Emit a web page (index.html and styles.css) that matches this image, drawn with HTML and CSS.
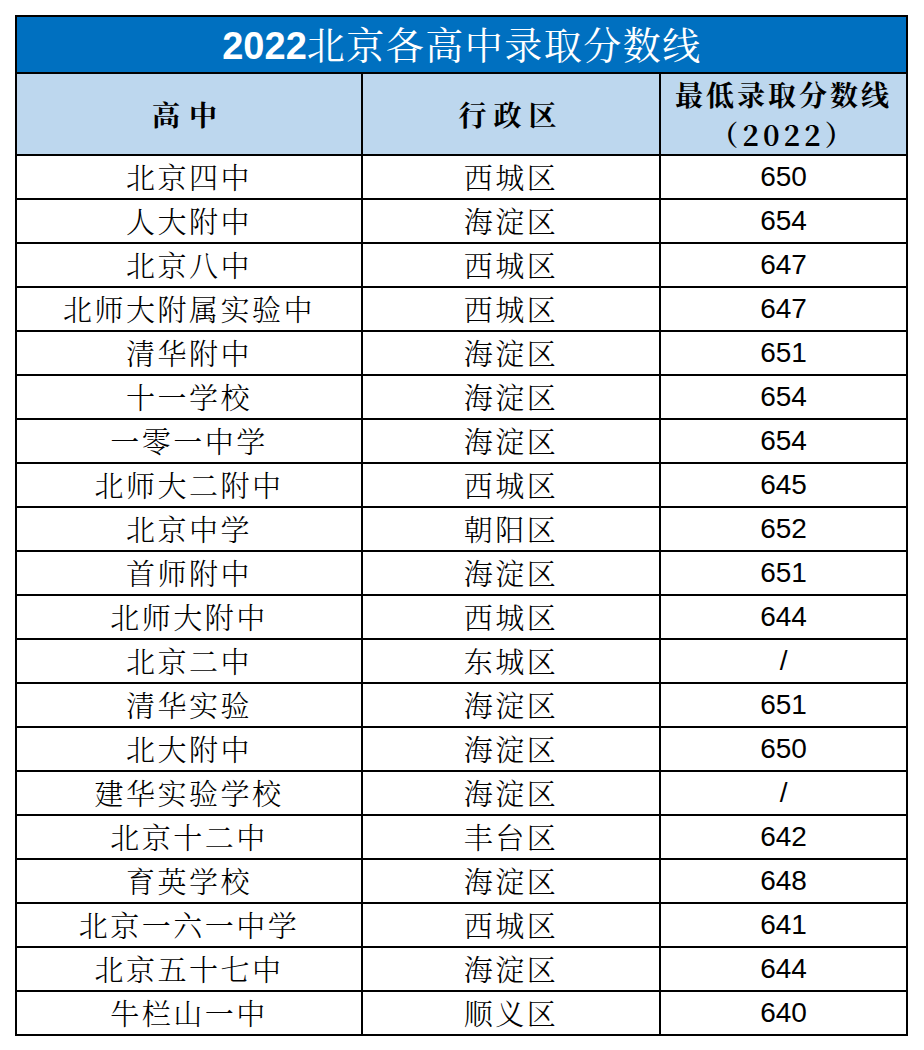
FILE: index.html
```html
<!DOCTYPE html>
<html lang="zh-CN">
<head>
<meta charset="utf-8">
<title>2022北京各高中录取分数线</title>
<link rel="stylesheet" href="styles.css">
</head>
<body>
<table class="score-table">
  <colgroup>
    <col class="col-school">
    <col class="col-district">
    <col class="col-score">
  </colgroup>
  <thead>
    <tr class="title-row">
      <th colspan="3"><span class="title-num">2022</span>北京各高中录取分数线</th>
    </tr>
    <tr class="head-row">
      <th class="h-school">高中</th>
      <th class="h-district">行政区</th>
      <th class="h-score"><span class="h-score-main">最低录取分数线</span><br><span class="h-score-year">（2022）</span></th>
    </tr>
  </thead>
  <tbody>
    <tr><td class="cn">北京四中</td><td class="cn">西城区</td><td class="num">650</td></tr>
    <tr><td class="cn">人大附中</td><td class="cn">海淀区</td><td class="num">654</td></tr>
    <tr><td class="cn">北京八中</td><td class="cn">西城区</td><td class="num">647</td></tr>
    <tr><td class="cn">北师大附属实验中</td><td class="cn">西城区</td><td class="num">647</td></tr>
    <tr><td class="cn">清华附中</td><td class="cn">海淀区</td><td class="num">651</td></tr>
    <tr><td class="cn">十一学校</td><td class="cn">海淀区</td><td class="num">654</td></tr>
    <tr><td class="cn">一零一中学</td><td class="cn">海淀区</td><td class="num">654</td></tr>
    <tr><td class="cn">北师大二附中</td><td class="cn">西城区</td><td class="num">645</td></tr>
    <tr><td class="cn">北京中学</td><td class="cn">朝阳区</td><td class="num">652</td></tr>
    <tr><td class="cn">首师附中</td><td class="cn">海淀区</td><td class="num">651</td></tr>
    <tr><td class="cn">北师大附中</td><td class="cn">西城区</td><td class="num">644</td></tr>
    <tr><td class="cn">北京二中</td><td class="cn">东城区</td><td class="num">/</td></tr>
    <tr><td class="cn">清华实验</td><td class="cn">海淀区</td><td class="num">651</td></tr>
    <tr><td class="cn">北大附中</td><td class="cn">海淀区</td><td class="num">650</td></tr>
    <tr><td class="cn">建华实验学校</td><td class="cn">海淀区</td><td class="num">/</td></tr>
    <tr><td class="cn">北京十二中</td><td class="cn">丰台区</td><td class="num">642</td></tr>
    <tr><td class="cn">育英学校</td><td class="cn">海淀区</td><td class="num">648</td></tr>
    <tr><td class="cn">北京一六一中学</td><td class="cn">西城区</td><td class="num">641</td></tr>
    <tr><td class="cn">北京五十七中</td><td class="cn">海淀区</td><td class="num">644</td></tr>
    <tr><td class="cn">牛栏山一中</td><td class="cn">顺义区</td><td class="num">640</td></tr>
  </tbody>
</table>
</body>
</html>
```

FILE: styles.css
```css
html, body {
  margin: 0;
  padding: 0;
  background: #ffffff;
}

.score-table {
  border-collapse: collapse;
  table-layout: fixed;
  width: 893px;
  margin: 15px 0 0 15px;
  font-family: "Noto Serif CJK SC", "Noto Sans CJK SC", sans-serif;
  color: #000000;
}

.col-school { width: 346px; }
.col-district { width: 298px; }
.col-score { width: 247px; }

.score-table th,
.score-table td {
  border: 2px solid #000000;
  padding: 0;
  text-align: center;
  vertical-align: middle;
  white-space: nowrap;
}

.title-row th {
  background: #0070c0;
  color: #ffffff;
  height: 52px;
  font-size: 38px;
  font-weight: normal;
  letter-spacing: 1.5px;
  line-height: 52px;
  padding-left: 1px;
}

.title-num {
  font-family: "Liberation Sans", Arial, sans-serif;
  font-weight: bold;
  font-size: 38px;
  letter-spacing: 0;
}

.head-row th {
  background: #bdd7ee;
  height: 79px;
  font-size: 28px;
  font-weight: bold;
  line-height: 40px;
}

.h-school {
  letter-spacing: 9px;
  padding-left: 9px;
}

.h-district {
  letter-spacing: 7px;
  padding-left: 7px;
}

.h-score {
  letter-spacing: 3px;
  padding-left: 3px;
}

.h-score-year {
  letter-spacing: 4px;
}

.score-table td {
  height: 42px;
  line-height: 42px;
}

.cn {
  font-size: 29px;
  letter-spacing: 2.5px;
  padding-left: 2.5px;
  font-weight: 300;
}

.num {
  font-family: "Liberation Sans", Arial, sans-serif;
  font-size: 28px;
}
```
